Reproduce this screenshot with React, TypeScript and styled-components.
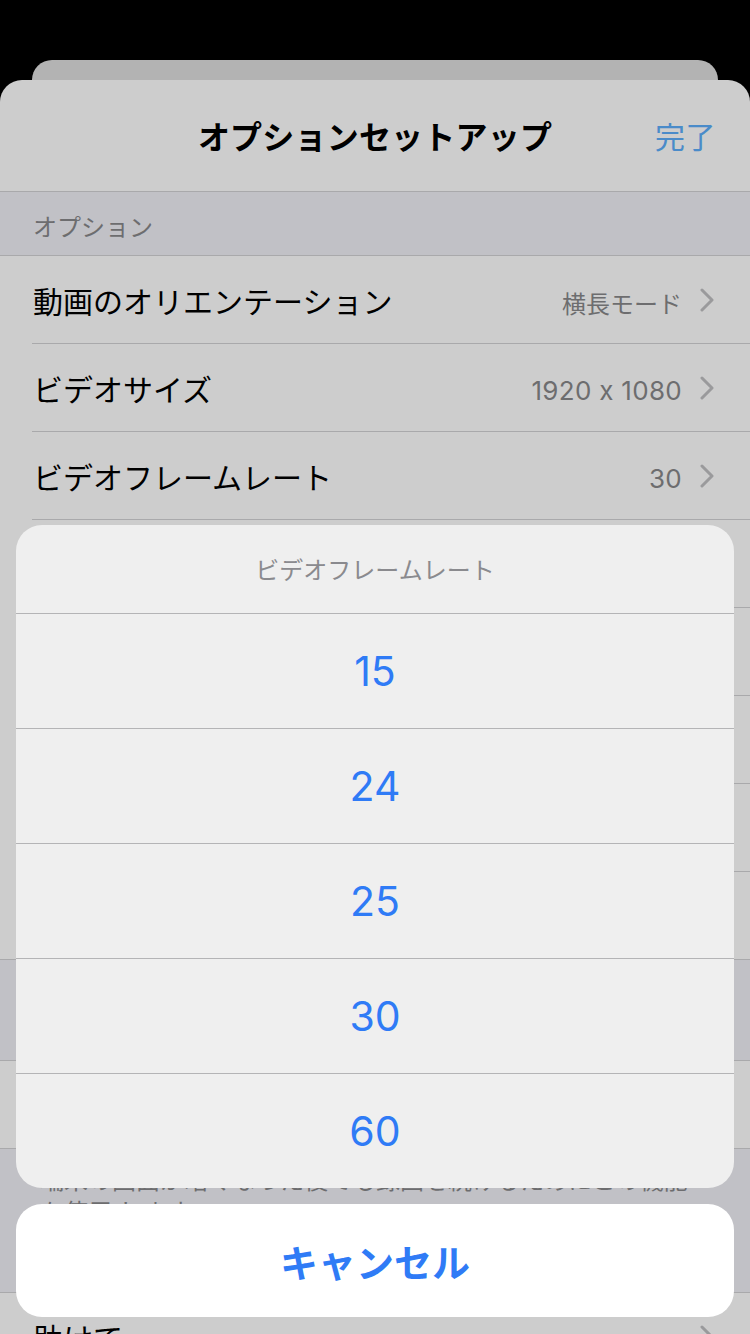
import React from 'react';
import styled, { createGlobalStyle } from 'styled-components';

const C = {
  black: '#000000',
  backCard: '#b3b3b3',
  sheet: '#cdcdcd',
  section: '#c1c1c6',
  line: '#a9a9ab',
  text: '#000000',
  muted: '#6d6d6f',
  chevron: '#9a9a9c',
  dimBlue: '#4a8bc9',
  action: '#efefef',
  actionLine: '#b4b4b6',
  actionTitle: '#8a8a8e',
  blue: '#2f7bf6',
};

const FONT = `Inter, 'Noto Sans CJK JP', 'Noto Sans', sans-serif`;

const Global = createGlobalStyle`
  html, body { margin:0; padding:0; background:${C.black}; }
  body {
    font-family:${FONT}; -webkit-font-smoothing:antialiased;
    font-feature-settings:'calt' 0;
  }
  * { box-sizing:border-box; }
`;

const Screen = styled.div`
  position:relative; width:750px; height:1334px; overflow:hidden;
  background:${C.black}; padding-top:60px;
  display:flex; flex-direction:column;
`;
const BackCard = styled.div`
  height:20px; margin:0 32px; flex-shrink:0;
  background:${C.backCard}; border-radius:20px 20px 0 0;
`;
const Sheet = styled.div`
  flex:1; background:${C.sheet}; border-radius:22px 22px 0 0;
  display:flex; flex-direction:column; overflow:hidden;
`;
const NavBar = styled.div`
  height:112px; flex-shrink:0; display:grid;
  grid-template-columns:1fr auto 1fr; align-items:center;
  padding:0 34px 2px; border-bottom:1px solid ${C.line};
`;
const NavTitle = styled.div`
  grid-column:2; font-size:32px; font-weight:700; color:${C.text};
  letter-spacing:0.2px;
`;
const NavDone = styled.div`
  grid-column:3; justify-self:end; font-size:30px; color:${C.dimBlue};
  letter-spacing:0.5px;
`;
const SectionHead = styled.div<{ $h: number }>`
  height:${p => p.$h}px; flex-shrink:0; background:${C.section};
  border-bottom:1px solid ${C.line};
  display:flex; align-items:center; padding:3px 33px 0;
  font-size:24px; color:${C.muted};
`;
const Row = styled.div<{ $last?: boolean }>`
  height:88px; flex-shrink:0; margin-left:${p => (p.$last ? 0 : 32)}px;
  padding:0 36px 0 ${p => (p.$last ? 33 : 1)}px;
  display:flex; align-items:center; gap:18px;
  border-bottom:1px solid ${C.line};
`;
const Label = styled.div`
  flex:1; font-size:30px; color:${C.text}; white-space:nowrap;
`;
const Value = styled.div<{ $num?: boolean }>`
  font-size:${p => (p.$num ? 26 : 24)}px; color:${C.muted}; padding-top:6px;
  letter-spacing:${p => (p.$num ? '0.3px' : '0')};
`;
const Footer = styled.div`
  height:144px; flex-shrink:0; background:${C.section};
  border-bottom:1px solid ${C.line};
  padding:16px 60px 0 40px; font-size:24px; line-height:32px; color:${C.muted};
`;

const Overlay = styled.div`
  position:absolute; left:16px; right:16px; bottom:17px;
  display:flex; flex-direction:column; gap:16px;
`;
const ActionGroup = styled.div`
  background:${C.action}; border-radius:26px; overflow:hidden;
  display:flex; flex-direction:column;
`;
const ActionTitle = styled.div`
  height:88px; display:flex; align-items:center; justify-content:center;
  font-size:24px; color:${C.actionTitle}; padding-bottom:2px;
`;
const ActionItem = styled.div`
  height:115px; border-top:1px solid ${C.actionLine};
  display:flex; align-items:center; justify-content:center;
  font-size:41px; color:${C.blue}; padding-bottom:1px;
`;
const CancelBtn = styled.div`
  height:113px; background:#ffffff; border-radius:26px;
  display:flex; align-items:center; justify-content:center;
  font-size:38px; font-weight:700; color:${C.blue};
`;

const Chevron = () => (
  <svg width="14" height="24" viewBox="0 0 14 24" fill="none">
    <polyline points="2,2 12,12 2,22" stroke={C.chevron} strokeWidth="3" strokeLinecap="round" strokeLinejoin="round" />
  </svg>
);

const rows: { label: string; value?: string; num?: boolean }[] = [
  { label: '動画のオリエンテーション', value: '横長モード' },
  { label: 'ビデオサイズ', value: '1920 x 1080', num: true },
  { label: 'ビデオフレームレート', value: '30', num: true },
  { label: 'オーディオ', value: 'オン' },
  { label: 'オーディオサンプルレート', value: '44100', num: true },
  { label: 'カメラ', value: '背面' },
  { label: 'フォーカス', value: '自動' },
  { label: '手ぶれ補正', value: 'オン' },
];

const rates = ['15', '24', '25', '30', '60'];

export default function App() {
  return (
    <>
      <Global />
      <Screen>
        <BackCard />
        <Sheet>
          <NavBar>
            <NavTitle>オプションセットアップ</NavTitle>
            <NavDone>完了</NavDone>
          </NavBar>
          <SectionHead $h={64}>オプション</SectionHead>
          {rows.map((r, i) => (
            <Row key={r.label} $last={i === rows.length - 1}>
              <Label>{r.label}</Label>
              {r.value && <Value $num={r.num}>{r.value}</Value>}
              <Chevron />
            </Row>
          ))}
          <SectionHead $h={101}>その他</SectionHead>
          <Row $last>
            <Label>バックグラウンド録画</Label>
            <Chevron />
          </Row>
          <Footer>
            端末の画面が暗くなった後でも録画を続けるためにこの機能を使用
            します。
          </Footer>
          <Row $last>
            <Label>助けて</Label>
            <Chevron />
          </Row>
        </Sheet>

        <Overlay>
          <ActionGroup>
            <ActionTitle>ビデオフレームレート</ActionTitle>
            {rates.map(r => (
              <ActionItem key={r}>{r}</ActionItem>
            ))}
          </ActionGroup>
          <CancelBtn>キャンセル</CancelBtn>
        </Overlay>
      </Screen>
    </>
  );
}
